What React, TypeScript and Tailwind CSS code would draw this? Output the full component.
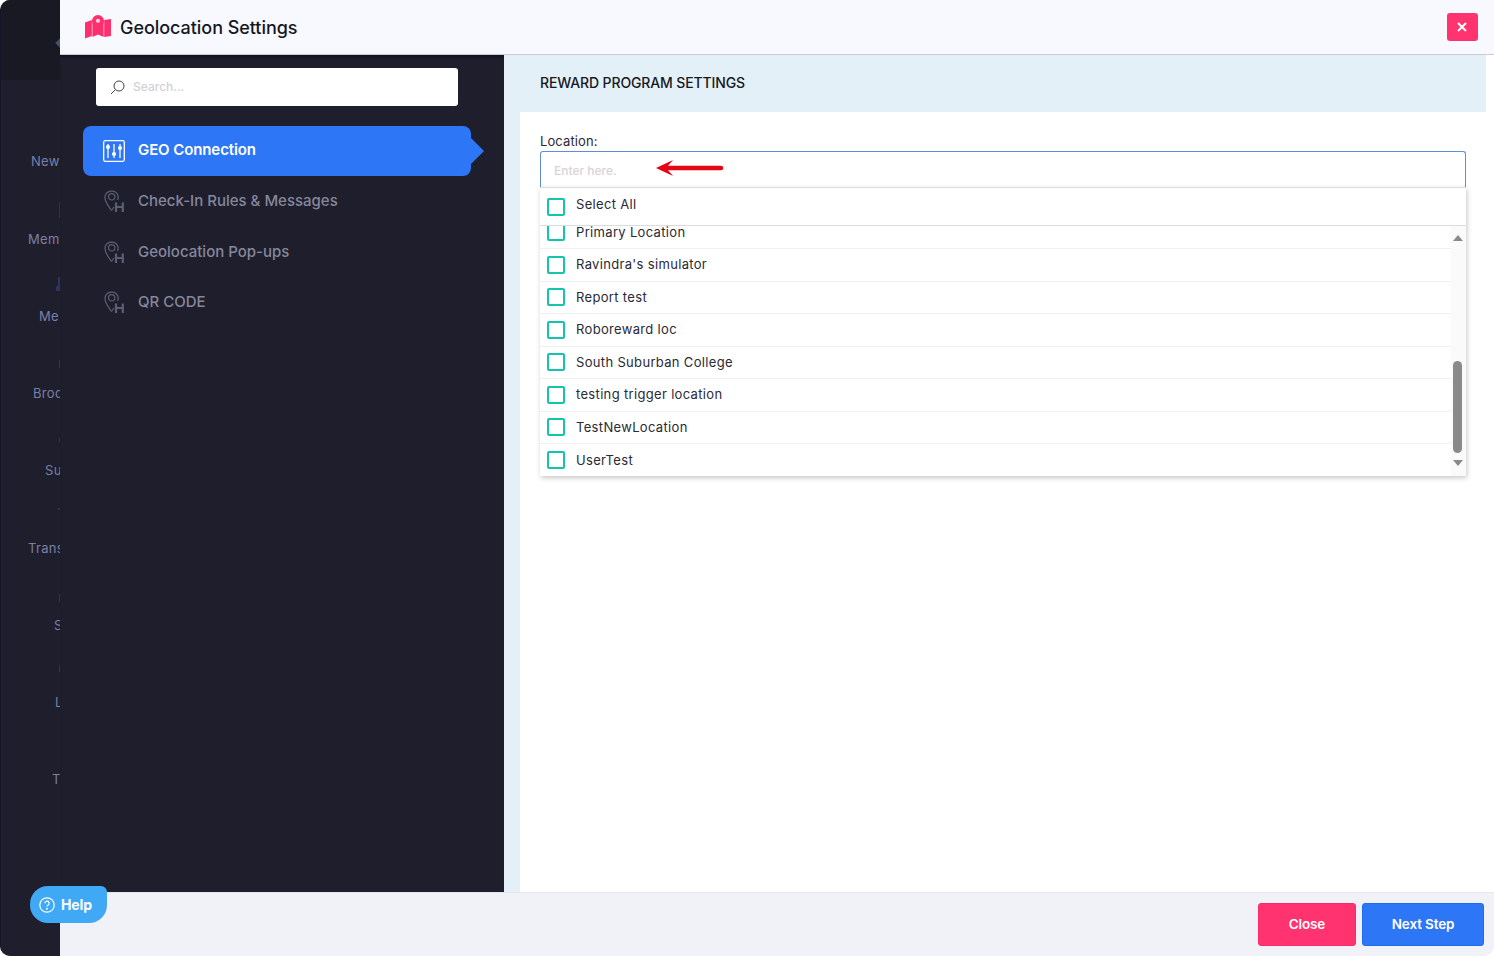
import React from "react";

const font = { fontFamily: "Inter, 'Noto Sans', sans-serif" };

const railLabels = [
  { t: "New", pl: "pl-[31px]", mt: "mt-[152px]" },
  { t: "Mem", pl: "pl-[28px]", mt: "mt-[60px]" },
  { t: "Me", pl: "pl-[39px]", mt: "mt-[59px]" },
  { t: "Broc", pl: "pl-[33px]", mt: "mt-[59px]" },
  { t: "Su", pl: "pl-[45px]", mt: "mt-[59px]" },
  { t: "Trans", pl: "pl-[28px]", mt: "mt-[60px]" },
  { t: "S", pl: "pl-[54px]", mt: "mt-[59px]" },
  { t: "L", pl: "pl-[55px]", mt: "mt-[59px]" },
  { t: "T", pl: "pl-[52px]", mt: "mt-[59px]" },
];

const rows = [
  "Primary Location",
  "Ravindra's simulator",
  "Report test",
  "Roboreward loc",
  "South Suburban College",
  "testing trigger location",
  "TestNewLocation",
  "UserTest",
];

function PinH() {
  return (
    <svg width="22" height="24" viewBox="0 0 22 24" fill="none" stroke="#5c5e73" strokeWidth="1.2">
      <path d="M8.5 21.5 C6 17.5 2 13.5 2 8.5 A6.7 6.7 0 0 1 15 6.5 C15.4 8 15.2 9.5 14.6 11" />
      <circle cx="8.7" cy="7.8" r="3.2" />
      <path d="M8.5 21.5 L11 18" />
      <path d="M13 13.5 V23 M19.8 13.5 V23 M13 18 H19.8" strokeWidth="2.2" />
    </svg>
  );
}

function Sliders() {
  return (
    <svg width="22" height="22" viewBox="0 0 22 22" fill="none" stroke="#fff" strokeWidth="1.3">
      <rect x="0.7" y="0.7" width="20.6" height="20.6" rx="1.5" />
      <path d="M5 4 V18 M11 4 V18 M17 4 V18" />
      <circle cx="5" cy="7" r="1.4" fill="#fff" />
      <circle cx="11" cy="14" r="1.4" fill="#fff" />
      <circle cx="17" cy="8" r="1.4" fill="#fff" />
    </svg>
  );
}

function MapLogo() {
  return (
    <svg width="28" height="24" viewBox="0 0 28 24">
      <path d="M1 7.5 L7.8 5 V21 L1 23.5 Z" fill="#ff2f6e" />
      <path d="M8.4 5 L10 6 L14 15 L18 6 L19.6 5 V22 L14 19.5 L8.4 22 Z" fill="#ff2f6e" />
      <path d="M20.2 5 L27 4 V21 L20.2 22 Z" fill="#ff2f6e" />
      <path d="M14 0 A6 6 0 0 1 20 6 C20 9.5 16 13 14 16 C12 13 8 9.5 8 6 A6 6 0 0 1 14 0 Z" fill="#ff2f6e" />
      <circle cx="14" cy="5.8" r="2.1" fill="#fbd0dd" />
    </svg>
  );
}

function Box() {
  return <span className="block h-[18px] w-[18px] shrink-0 rounded-[2px] border-2 border-[#13c4ae] bg-white" />;
}

export default function App() {
  return (
    <div className="relative flex h-[956px] w-[1494px] overflow-hidden bg-white" style={font}>
      <aside className="relative flex h-full w-[60px] shrink-0 flex-col overflow-hidden rounded-l-[10px] border-l border-[#14142a] bg-[#1e1e2d]">
        <div className="relative h-[80px] shrink-0 bg-[#191923]">
          <span className="absolute right-[-5px] top-[39px] h-[8px] w-[8px] rotate-45 bg-[#47506a]" />
        </div>
        <div className="-ml-px -mt-[80px] flex flex-col">
          {railLabels.map((l) => (
            <div
              key={l.t}
              className={`${l.pl} ${l.mt} whitespace-nowrap text-[13px] leading-[18px] tracking-[0.3px] text-[#7a80a6]`}
            >
              {l.t}
            </div>
          ))}
        </div>
        <span className="absolute right-0 top-[202px] h-[16px] w-px bg-[#2c3050]" />
        <span className="absolute right-0 top-[277px] h-[8px] w-[2px] bg-[#2f3558]" />
        <span className="absolute right-0 top-[285px] h-[6px] w-[4px] rounded-tl-[3px] bg-[#2f3558]" />
        <span className="absolute right-0 top-[360px] h-[8px] w-px bg-[#2f3558]" />
        <span className="absolute right-0 top-[438px] h-[4px] w-px bg-[#2f3558]" />
        <span className="absolute right-0 top-[508px] h-[2px] w-[2px] bg-[#2f3558]" />
        <span className="absolute right-0 top-[594px] h-[8px] w-px bg-[#2f3558]" />
        <span className="absolute right-0 top-[665px] h-[7px] w-px bg-[#2f3558]" />
      </aside>

      <div className="flex min-w-0 flex-1 flex-col">
        <header className="flex h-[55px] shrink-0 items-center justify-between border-b border-[#c9ccd8] bg-[#f8f9ff] pl-[24px] pr-[16px]">
          <div className="flex items-center gap-[8px]">
            <MapLogo />
            <h1 className="mt-[1px] text-[18px] font-medium leading-none tracking-[-0.05px] text-[#17171f]">Geolocation Settings</h1>
          </div>
          <button className="flex h-[28px] w-[31px] items-center justify-center rounded-[3px] bg-[#ff3370] pr-px">
            <svg width="10" height="10" viewBox="0 0 10 10" stroke="#fff" strokeWidth="2">
              <path d="M1 1 L9 9 M9 1 L1 9" />
            </svg>
          </button>
        </header>

        <div className="flex min-h-0 flex-1">
          <nav className="flex w-[444px] shrink-0 flex-col bg-[#1e1e2d] pt-[13px] shadow-[inset_0_4px_4px_-3px_rgba(0,0,0,0.5)]">
            <div className="ml-[36px] flex h-[38px] w-[362px] items-center gap-[8px] rounded-[3px] bg-white pl-[14px]">
              <svg width="15" height="15" viewBox="0 0 15 15" fill="none" stroke="#444" strokeWidth="1">
                <circle cx="9" cy="6" r="5" />
                <path d="M5.5 9.5 L1 14" />
              </svg>
              <span className="text-[12px] font-medium text-[#d2d2d6]">Search...</span>
            </div>
            <div className="relative ml-[23px] mt-[20px] flex h-[50px] w-[388px] items-center gap-[13px] rounded-[8px] bg-[#2d76f5] pl-[20px]">
              <Sliders />
              <span className="mb-[1px] text-[15px] font-semibold tracking-[-0.1px] text-white">GEO Connection</span>
              <span className="absolute right-[-13px] top-[12px] h-0 w-0 border-y-[13px] border-l-[13px] border-y-transparent border-l-[#2d76f5]" />
            </div>
            {["Check-In Rules & Messages", "Geolocation Pop-ups", "QR CODE"].map((t, i) => (
              <div
                key={t}
                className={`ml-[23px] flex h-[50px] items-center gap-[13px] pl-[20px] ${i === 1 ? "mt-[1px]" : "mt-[0px]"}`}
              >
                <PinH />
                <span className="text-[15px] font-medium text-[#86879b]">{t}</span>
              </div>
            ))}
          </nav>

          <main className="flex min-w-0 flex-1 flex-col bg-white">
            <div className="flex h-[57px] w-[982px] shrink-0 items-center bg-[#e3f0f8] pb-[3px] pl-[36px] text-[14px] font-medium tracking-[-0.13px] text-[#17171f]">
              REWARD PROGRAM SETTINGS
            </div>
            <div className="flex min-h-0 flex-1">
              <div className="w-[16px] shrink-0 bg-[#e3f0f8]" />
              <div className="flex-1 pl-[20px] pr-[28px] pt-[20px]">
                <label className="mb-[1px] block text-[13px] leading-[18px] tracking-[0.1px] text-[#2a2a35]">Location:</label>
                <div className="relative">
                  <div className="flex h-[36px] items-start rounded-t-[3px] border border-b-0 border-[#5f8ed8] pl-[13px] pt-[11px] text-[12px] font-medium leading-[16px] text-[#d8d4d6]">
                    Enter here.
                  </div>
                  <svg className="absolute left-[115px] top-[8px]" width="70" height="18" viewBox="0 0 70 18">
                    <path d="M1 9 L18 1 L13 6.7 H66 A2.3 2.3 0 0 1 66 11.3 H13 L18 17 Z" fill="#e30613" />
                  </svg>
                  <div className="flex flex-col bg-white shadow-[1px_2px_5px_rgba(0,0,0,0.22)]">
                    <div className="flex h-[39px] items-center gap-[11px] border-y border-[#dcdcdc] px-[7px] text-[13px] tracking-[0.33px] text-[#2a2a35]">
                      <Box />
                      <span className="mb-[4px]">Select All</span>
                    </div>
                    <div className="flex h-[250px]">
                      <div className="min-w-0 flex-1 overflow-hidden">
                        <div className="-mt-[9.5px]">
                          {rows.map((r, i) => (
                            <div
                              key={r}
                              className={`flex h-[32.5px] items-center gap-[11px] px-[7px] text-[13px] tracking-[0.33px] text-[#2a2a35] ${
                                i < rows.length - 1 ? "border-b border-[#f1f1f1]" : ""
                              }`}
                            >
                              <Box />
                              {r}
                            </div>
                          ))}
                        </div>
                      </div>
                      <div className="flex w-[15px] shrink-0 flex-col items-center bg-[#fafafa] pr-[2px]">
                        <svg className="mt-[9px]" width="10" height="6" viewBox="0 0 10 6">
                          <path d="M5 0 L10 6 H0 Z" fill="#8a8a8a" />
                        </svg>
                        <div className="mt-[120px] h-[92px] w-[9px] rounded-[5px] bg-[#8a8a8a]" />
                        <svg className="mt-[7px]" width="10" height="6" viewBox="0 0 10 6">
                          <path d="M0 0 H10 L5 6 Z" fill="#8a8a8a" />
                        </svg>
                      </div>
                    </div>
                  </div>
                </div>
              </div>
            </div>
          </main>
        </div>

        <footer className="flex h-[64px] shrink-0 items-start justify-end gap-[6px] rounded-br-[10px] border-t border-[#e6e8ef] bg-[#f0f2f8] pr-[10px] pt-[10px]">
          <button className="h-[43px] w-[98px] rounded-[3px] border border-[#f52d68] bg-[#ff3370] pb-[1px] text-[13.5px] font-semibold tracking-[-0.15px] text-white">Close</button>
          <button className="h-[43px] w-[122px] rounded-[3px] border border-[#1f6cf0] bg-[#2d76f5] pb-[1px] text-[13.5px] font-semibold tracking-[-0.15px] text-white">Next Step</button>
        </footer>
      </div>

      <div className="absolute left-[30px] top-[886px] flex h-[37px] w-[77px] items-center gap-[6px] rounded-[18px] rounded-tr-[6px] bg-[#3fa9f5] pl-[9px] text-[14px] font-bold tracking-[-0.1px] text-white">
        <svg width="16" height="16" viewBox="0 0 16 16" fill="none" stroke="#fff" strokeWidth="1.2">
          <circle cx="8" cy="8" r="7.2" />
          <path d="M5.9 6.2 A2.1 2.1 0 1 1 8.8 8.2 C8.2 8.5 8 8.9 8 9.6" />
          <circle cx="8" cy="11.7" r="0.4" />
        </svg>
        Help
      </div>
    </div>
  );
}
